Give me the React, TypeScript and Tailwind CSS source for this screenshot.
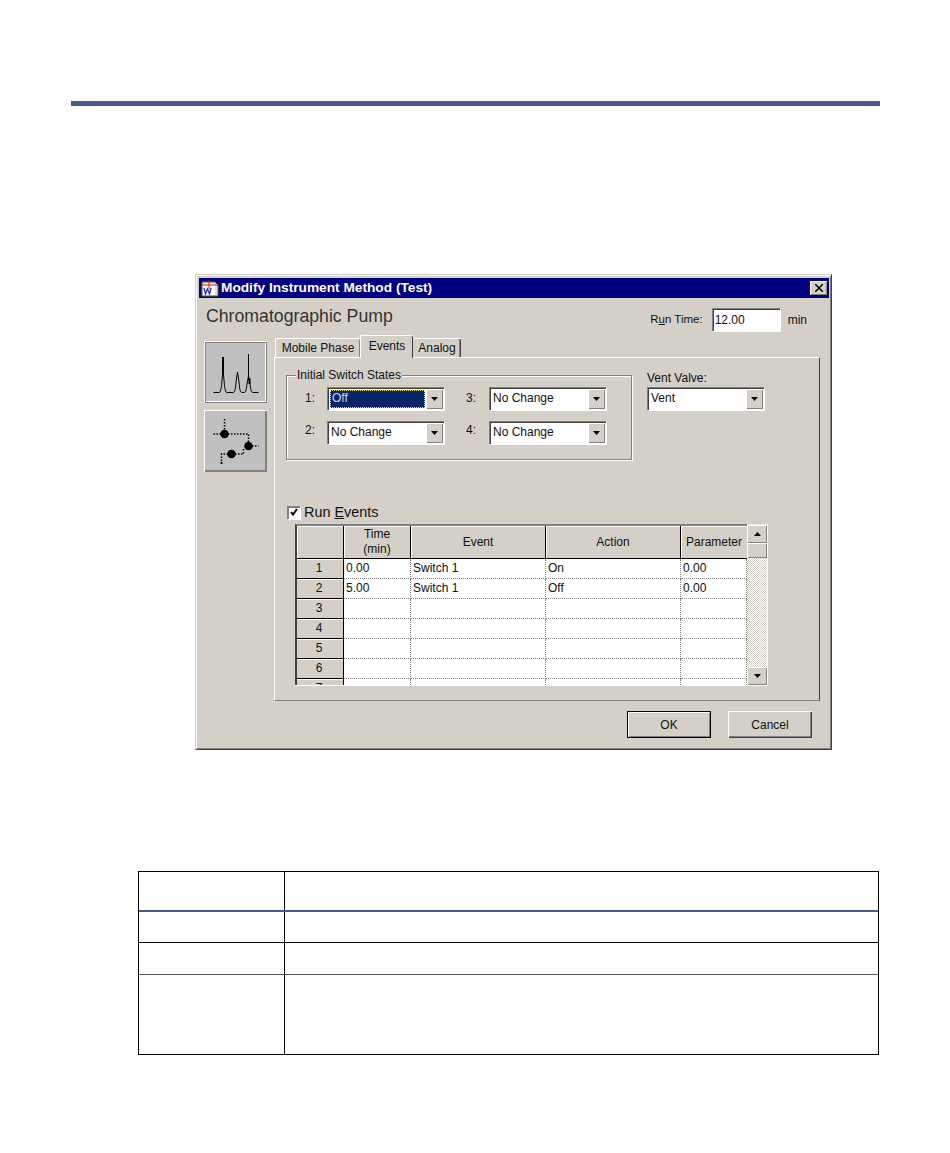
const raised = 'shadow-[inset_1px_1px_0_#fff,inset_-1px_-1px_0_#808080,inset_-2px_-2px_0_#d4d0c8]';
const sunken = 'shadow-[inset_1px_1px_0_#808080,inset_2px_2px_0_#404040,1px_1px_0_#fff]';

function Arrow({ up = false }: { up?: boolean }) {
  return (
    <svg width="7" height="4" viewBox="0 0 7 4" className={up ? 'rotate-180' : ''}>
      <path d="M0 0h7L3.500 4z" fill="#000" />
    </svg>
  );
}

function Combo({ value, selected = false }: { value: string; selected?: boolean }) {
  return (
    <div className={`flex h-[23px] w-[117px] shrink-0 items-stretch bg-white pl-[2px] pt-[2px] pr-[1px] pb-[1px] ${sunken}`}>
      {selected ? (
        <div className="m-[1px] flex flex-1 items-center border border-dotted border-[#f5e56b] bg-[#0a246a] pb-[2px] pl-[1px] text-[#d8dcec]">{value}</div>
      ) : (
        <div className="flex flex-1 items-center pb-[2px] pl-[2px]">{value}</div>
      )}
      <div className={`flex w-[17px] items-center justify-center bg-[#d4d0c8] ${raised}`}>
        <Arrow />
      </div>
    </div>
  );
}

function PeaksIcon() {
  return (
    <svg width="48" height="44" viewBox="0 0 48 44" fill="none" stroke="#000" strokeWidth="1">
      <path d="M1.500 42.500H7C9 42.500 9.500 36 10 30L11 20L12 30C12.500 36 13 42.500 15 42.500H21C23 42.500 23.500 38 24 32L25.500 22L27 32C27.500 38 28 42.500 30 42.500H32C34 42.500 34.500 38 35 34L36.500 26L38 34C38.500 38 39 42.500 41 42.500H46.500" />
      <path d="M11 7v17" strokeWidth="2" />
      <path d="M36.500 4v26" />
      <path d="M37.500 28v6" strokeWidth="2" />
    </svg>
  );
}

function NetworkIcon() {
  return (
    <svg width="48" height="48" viewBox="0 0 48 48" fill="none" stroke="#000" strokeWidth="1.500">
      <g strokeDasharray="1.500 1.500">
        <path d="M12.500 2v12" />
        <path d="M1.500 17h8" />
        <path d="M16 17h20.500v9" />
        <path d="M40 29h6.500" />
        <path d="M23 37h8.500v-6" />
        <path d="M16 37H9.500v8" />
      </g>
      <circle cx="12.500" cy="17" r="3.500" fill="#000" />
      <circle cx="36.500" cy="29" r="3.500" fill="#000" />
      <circle cx="19.500" cy="37" r="3.500" fill="#000" />
      <rect x="8.500" y="45" width="2" height="2" fill="#000" stroke="none" />
    </svg>
  );
}

function AppIcon() {
  return (
    <svg width="18" height="18" viewBox="0 0 18 18" className="shrink-0">
      <path d="M1 3h13l3 3v11H1z" fill="#e8e4c0" stroke="#6b6b2f" />
      <rect x="2" y="5" width="12" height="11" fill="#fff" />
      <path d="M3 9l1.500 6 2-5 2 5L10 9" fill="none" stroke="#1030c0" strokeWidth="1.300" />
      <path d="M1 6h16M8 1v9" stroke="#e01010" />
    </svg>
  );
}

const rows = [
  { id: '1', time: '0.00', event: 'Switch 1', action: 'On', parameter: '0.00' },
  { id: '2', time: '5.00', event: 'Switch 1', action: 'Off', parameter: '0.00' },
  { id: '3', time: '', event: '', action: '', parameter: '' },
  { id: '4', time: '', event: '', action: '', parameter: '' },
  { id: '5', time: '', event: '', action: '', parameter: '' },
  { id: '6', time: '', event: '', action: '', parameter: '' },
  { id: '7', time: '', event: '', action: '', parameter: '' },
];

function EventsGrid() {
  const head = `flex items-center justify-center border-r border-b border-black bg-[#d4d0c8] text-center leading-[15px] shadow-[inset_1px_1px_0_#fff]`;
  const cell = 'flex h-[20px] items-center border-r border-b border-dotted border-[#808080] bg-white pb-[2px] pl-[2px]';
  return (
    <div className="ml-[9px] mt-[5px] flex h-[162px] w-[473px] items-stretch bg-white pb-[1px] pr-[1px]">
      <div className="w-[452px] overflow-hidden border-l-2 border-t-2 border-l-[#404040] border-t-[#808080]">
        <div className="grid grid-cols-[47px_67px_135px_135px_66px] grid-rows-[33px] auto-rows-[20px]">
          <div className={head} />
          <div className={head}>Time<br />(min)</div>
          <div className={head}>Event</div>
          <div className={head}>Action</div>
          <div className={`${head} border-r-0`}>Parameter</div>
          {rows.map((r) => (
            <div key={r.id} className="contents">
              <div className="flex h-[20px] items-center justify-center border-r border-b border-black bg-[#d4d0c8] pb-[2px] pr-[2px] shadow-[inset_0_1px_0_#fff]">{r.id}</div>
              <div className={cell}>{r.time}</div>
              <div className={cell}>{r.event}</div>
              <div className={cell}>{r.action}</div>
              <div className={cell}>{r.parameter}</div>
            </div>
          ))}
        </div>
      </div>
      <div className="flex w-[20px] flex-col bg-[repeating-conic-gradient(#d4d0c8_0_25%,#fff_0_50%)] bg-[length:2px_2px] pt-[1px]">
        <div className={`flex h-[18px] items-center justify-center bg-[#d4d0c8] ${raised}`}><Arrow up /></div>
        <div className={`h-[15px] bg-[#d4d0c8] ${raised}`} />
        <div className="flex-1" />
        <div className={`flex h-[18px] items-center justify-center bg-[#d4d0c8] ${raised}`}><Arrow /></div>
      </div>
    </div>
  );
}

export default function App() {
  return (
    <div className="h-[1153px] w-[950px] overflow-hidden bg-white pt-[101px] font-['Liberation_Sans',Arial,sans-serif] text-[12px] text-[#111]">
      {/* Page rule */}
      <div className="ml-[71px] h-[5px] w-[809px] bg-[#4a5a8c]" />

      {/* Dialog */}
      <div className="ml-[195px] mt-[168px] h-[476px] w-[637px] border border-t-[#d4d0c8] border-l-[#d4d0c8] border-r-[#404040] border-b-[#404040] bg-[#d4d0c8] pl-[3px] pr-[2px] pt-[3px] shadow-[inset_1px_1px_0_#fff,inset_-1px_-1px_0_#808080]">
        <div className="flex h-[20px] items-center justify-between bg-[#000080] pl-[2px] pr-[2px]">
          <div className="flex items-center gap-[2px] text-[13.700px] font-bold text-white">
            <AppIcon />
            <span>Modify Instrument Method (Test)</span>
          </div>
          <div className={`flex h-[14px] w-[17px] items-center justify-center bg-[#d4d0c8] ${raised}`}>
            <svg width="8" height="8" viewBox="0 0 8 8" stroke="#000" strokeWidth="1.500"><path d="M0 0l8 8M8 0L0 8" /></svg>
          </div>
        </div>

        <div className="mt-[10px] flex h-[23px] items-center pl-[7px]">
          <span className="pb-[6px] text-[17.700px] leading-none text-[#333]">Chromatographic Pump</span>
          <span className="ml-auto text-[11.500px]">R<span className="underline">u</span>n Time:</span>
          <div className={`ml-[9px] flex h-[23px] w-[68px] items-center bg-white pl-[3px] ${sunken}`}>12.00</div>
          <span className="ml-[8px] mr-[22px]">min</span>
        </div>

        <div className="mt-[4px] flex pl-[5px]">
          <div className="flex w-[63px] flex-col gap-[7px] pt-[6px]">
            <div className="flex h-[62px] items-center justify-center bg-[#c0c0c0] shadow-[inset_1px_1px_0_#fff,inset_2px_2px_0_#808080,inset_-1px_-1px_0_#808080,inset_-2px_-2px_0_#fff]">
              <PeaksIcon />
            </div>
            <div className="flex h-[62px] items-center justify-center bg-[#c0c0c0] shadow-[inset_1px_1px_0_#fff,inset_-2px_-2px_0_#808080]">
              <NetworkIcon />
            </div>
          </div>

          <div className="ml-[7px]">
            {/* Tabs */}
            <div className="flex h-[22px] items-end pl-[1px]">
              <div className="flex h-[19px] w-[85px] items-center justify-center rounded-t-[2px] border-t border-l border-white bg-[#d4d0c8] shadow-[inset_-1px_0_0_#808080]">Mobile Phase</div>
              <div className="z-10 -mb-[1px] flex h-[23px] w-[53px] items-center justify-center rounded-t-[2px] border-t border-l border-white bg-[#d4d0c8] pb-[3px] shadow-[inset_-1px_0_0_#404040]">Events</div>
              <div className="flex h-[19px] w-[48px] items-center justify-center rounded-t-[2px] border-t border-white bg-[#d4d0c8] shadow-[inset_-1px_0_0_#404040,inset_-2px_0_0_#808080]">Analog</div>
            </div>

            {/* Panel */}
            <div className="h-[344px] w-[546px] border border-t-white border-l-white border-r-[#404040] border-b-[#808080] pl-[11px] pt-[17px]">
              <div className="flex">
                <div className="relative h-[85px] w-[346px] border border-[#808080] shadow-[1px_1px_0_#fff,inset_1px_1px_0_#fff]">
                  <span className="absolute left-[9px] -top-[8px] bg-[#d4d0c8] px-[1px] leading-[14px]">Initial Switch States</span>
                  <div className="grid grid-cols-[162px_140px] gap-y-[11px] pl-[18px] pt-[11px]">
                    <div className="flex items-center gap-[14px]"><span className="w-[8px] pb-[2px]">1:</span><Combo value="Off" selected /></div>
                    <div className="flex items-center gap-[15px]"><span className="ml-[-1px] w-[8px] pb-[2px]">3:</span><Combo value="No Change" /></div>
                    <div className="flex items-center gap-[14px]"><span className="w-[8px] pb-[5px]">2:</span><Combo value="No Change" /></div>
                    <div className="flex items-center gap-[15px]"><span className="ml-[-1px] w-[8px] pb-[5px]">4:</span><Combo value="No Change" /></div>
                  </div>
                </div>
                <div className="ml-[15px]">
                  <div className="h-[12px] leading-[6px]">Vent Valve:</div>
                  <Combo value="Vent" />
                </div>
              </div>

              <div className="mt-[45px] flex items-center pl-[1px]">
                <div className="flex h-[13px] w-[13px] items-center justify-center bg-white shadow-[inset_1px_1px_0_#808080,inset_2px_2px_0_#808080,1px_1px_0_#fff]">
                  <svg width="8" height="8" viewBox="0 0 8 8" fill="none" stroke="#000" strokeWidth="2"><path d="M1 4l2 2.500L7 1" /></svg>
                </div>
                <span className="ml-[4px] text-[14.400px] leading-none">Run <span className="underline">E</span>vents</span>
              </div>

              <EventsGrid />
            </div>

            {/* Buttons */}
            <div className="mt-[10px] flex w-[538px] justify-end gap-[17px]">
              <div className="flex h-[27px] w-[84px] items-center justify-center border border-black bg-[#d4d0c8] shadow-[inset_1px_1px_0_#fff,inset_-1px_-1px_0_#808080]">OK</div>
              <div className="flex h-[27px] w-[84px] items-center justify-center bg-[#d4d0c8] shadow-[inset_1px_1px_0_#fff,inset_-1px_-1px_0_#404040,inset_-2px_-2px_0_#808080]">Cancel</div>
            </div>
          </div>
        </div>
      </div>

      {/* Empty table under the dialog */}
      <div className="ml-[138px] mt-[121px] w-[741px] border border-black">
        <div className="grid h-[40px] grid-cols-[146px_1fr] border-b-2 border-b-[#4a5a8c]">
          <div className="border-r border-black" /><div />
        </div>
        <div className="grid h-[31px] grid-cols-[146px_1fr] border-b border-black">
          <div className="border-r border-black" /><div />
        </div>
        <div className="grid h-[32px] grid-cols-[146px_1fr] border-b border-[#555]">
          <div className="border-r border-black" /><div />
        </div>
        <div className="grid h-[79px] grid-cols-[146px_1fr]">
          <div className="border-r border-black" /><div />
        </div>
      </div>
    </div>
  );
}
